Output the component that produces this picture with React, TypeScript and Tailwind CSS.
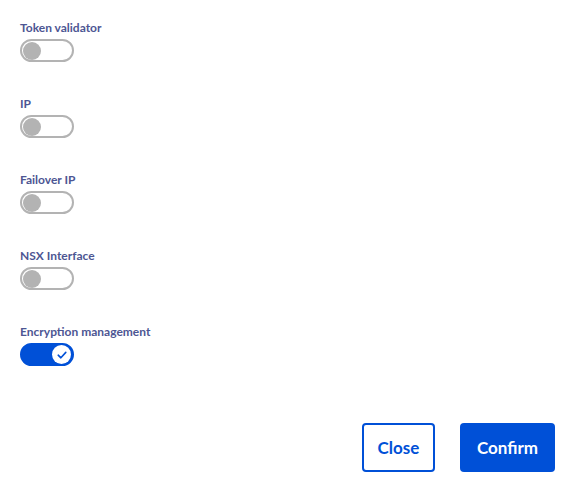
import React, { useState } from 'react';

interface Opcao {
  id: string;
  label: string;
  ativo: boolean;
}

const OPCOES_INICIAIS: Opcao[] = [
  { id: 'token', label: 'Token validator', ativo: false },
  { id: 'ip', label: 'IP', ativo: false },
  { id: 'failover', label: 'Failover IP', ativo: false },
  { id: 'nsx', label: 'NSX Interface', ativo: false },
  { id: 'encryption', label: 'Encryption management', ativo: true },
];

function Toggle({ ativo, onClick }: { ativo: boolean; onClick: () => void }) {
  return (
    <button
      onClick={onClick}
      className={`flex items-center w-[54px] h-[23px] rounded-full border-2 px-[1px] ${
        ativo ? 'bg-[#0050d7] border-[#0050d7] justify-end' : 'bg-white border-[#b3b3b3] justify-start'
      }`}
    >
      {ativo ? (
        <span className="flex items-center justify-center w-[19px] h-[19px] rounded-full bg-white">
          <svg width="12" height="12" viewBox="0 0 12 12" fill="none">
            <path d="M2.2 6.2 L4.9 8.8 L9.8 3.4" stroke="#0050d7" strokeWidth="1.6" strokeLinecap="round" strokeLinejoin="round" />
          </svg>
        </span>
      ) : (
        <span className="block w-[18px] h-[18px] rounded-full bg-[#b3b3b3]" />
      )}
    </button>
  );
}

export default function App() {
  const [opcoes, setOpcoes] = useState<Opcao[]>(OPCOES_INICIAIS);

  const alternar = (id: string) =>
    setOpcoes((lista) => lista.map((o) => (o.id === id ? { ...o, ativo: !o.ativo } : o)));

  return (
    <div className="w-[569px] h-[490px] bg-white font-['Lato','Liberation_Sans',sans-serif]">
      {/* Lista de opções */}
      <div className="flex flex-col gap-[34px] pl-5 pt-[20px]">
        {opcoes.map((o) => (
          <div key={o.id} className="flex flex-col items-start gap-[4px]">
            <span className="text-[12px] leading-[15px] font-bold text-[#4d5693]">{o.label}</span>
            <Toggle ativo={o.ativo} onClick={() => alternar(o.id)} />
          </div>
        ))}
      </div>

      {/* Ações */}
      <div className="flex justify-end gap-[25px] pr-[14px] mt-[57px]">
        <button className="w-[73px] h-[49px] rounded-[4px] border-2 border-[#0050d7] bg-white text-[#0050d7] text-[17px] font-bold">
          Close
        </button>
        <button className="w-[95px] h-[49px] rounded-[4px] bg-[#0050d7] text-white text-[17px] font-bold">
          Confirm
        </button>
      </div>
    </div>
  );
}
